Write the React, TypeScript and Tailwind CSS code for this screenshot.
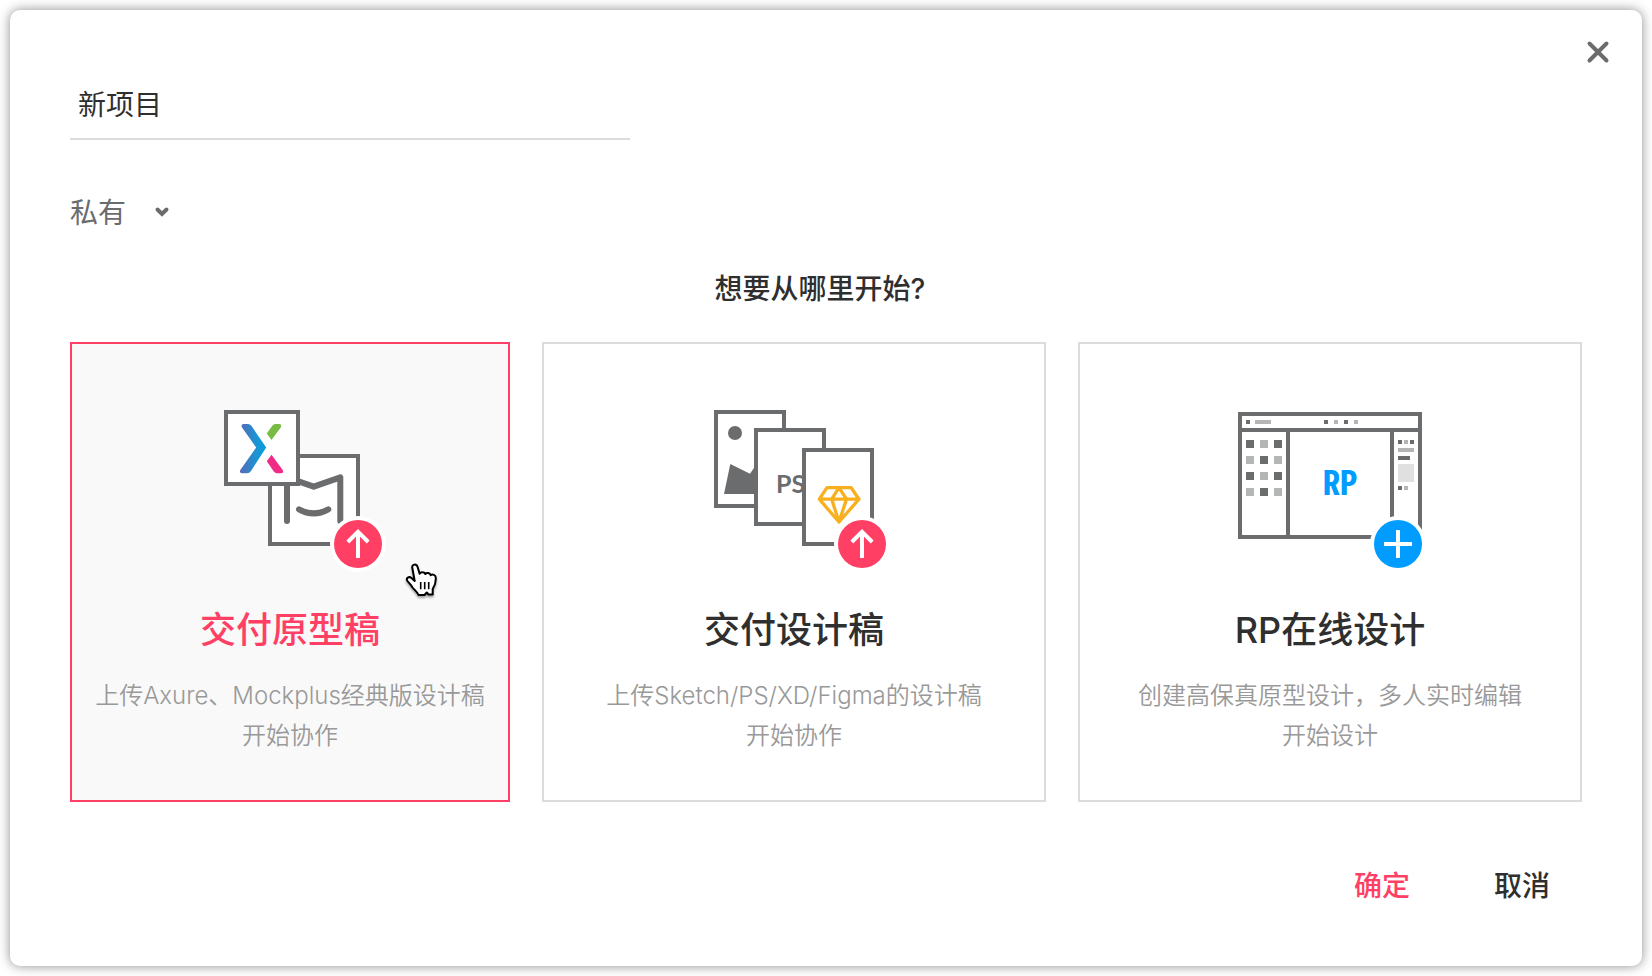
import { useState } from 'react';
import type { ReactNode } from 'react';
import clsx from 'clsx';

function UploadBadge() {
  return (
    <g>
      <circle cx="168" cy="144" r="28" fill="#fff" />
      <circle cx="168" cy="144" r="24" fill="#ff4064" />
      <path d="M168 158V132M157.8 142L168 131.8L178.2 142" fill="none" stroke="#fff" strokeWidth="4" />
    </g>
  );
}

function PrototypeIcon() {
  return (
    <svg width="200" height="180" viewBox="0 0 200 180" aria-hidden="true">
      <defs>
        <linearGradient id="axure-blue" x1="0" x2="1" y1="0" y2="0">
          <stop offset="0" stopColor="#5a6ab4" />
          <stop offset="0.6" stopColor="#1c93d3" />
          <stop offset="1" stopColor="#069fdc" />
        </linearGradient>
      </defs>
      <rect x="80" y="56" width="88" height="88" fill="#fff" stroke="#6b6c6e" strokeWidth="4" />
      <path
        d="M97 121V77.3L123.7 86.7L150.3 77.3V121M109 109.3Q123.7 117.5 138.3 109.3"
        fill="none"
        stroke="#6b6c6e"
        strokeWidth="6"
        strokeLinecap="round"
        strokeLinejoin="round"
      />
      <rect x="36" y="12" width="72" height="72" fill="#fff" stroke="#6b6c6e" strokeWidth="4" />
      <path
        d="M53.5 24H58q2 0 3.2 1.6L76.2 47.5L61 71q-1.5 2.3-4 2.3H52c-2 0-2.6-2-1.5-3.6L66.2 47.5L52 27.5c-1-1.7-.3-3.5 1.5-3.5z"
        fill="url(#axure-blue)"
      />
      <path d="M89 24c2 0 2.7 1.7 1.7 3.4L81.5 40L76.8 33.5L82.3 25.7q1.2-1.7 3-1.7z" fill="#78bc43" />
      <path d="M81.5 54.8L92.5 69.7c1.2 1.7.5 3.6-1.5 3.6h-4q-2 0-3.2-1.7L76.8 61.3z" fill="#ef2b87" />
      <UploadBadge />
    </svg>
  );
}

function DesignIcon() {
  return (
    <svg width="200" height="180" viewBox="0 0 200 180" aria-hidden="true">
      <rect x="22" y="12" width="68" height="94" fill="#fff" stroke="#6b6c6e" strokeWidth="4" />
      <circle cx="41" cy="33" r="7" fill="#6b6c6e" />
      <path d="M36.3 64L56 73.7L62 65V94H30z" fill="#6b6c6e" />
      <rect x="62" y="30" width="68" height="94" fill="#fff" stroke="#6b6c6e" strokeWidth="4" />
      <text x="82" y="93" fill="#6b6c6e" className="font-['Lato',sans-serif] text-[25px] font-bold">
        PS
      </text>
      <rect x="110" y="50" width="68" height="94" fill="#fff" stroke="#6b6c6e" strokeWidth="4" />
      <path
        d="M133 87.7H157.2L165 99.2L145 122L125.3 99.2zM125.3 99.2H165M137.7 99.2L145 87.7L152.5 99.2L145 122z"
        fill="none"
        stroke="#f9b01e"
        strokeWidth="3.3"
        strokeLinejoin="round"
      />
      <UploadBadge />
    </svg>
  );
}

function OnlineIcon() {
  const tools = [40, 56, 72, 88].flatMap((y, row) =>
    [16, 30, 44].map((x, col) => ({ x, y, dark: (row + col) % 2 === 0 }))
  );

  return (
    <svg width="200" height="180" viewBox="0 0 200 180" aria-hidden="true">
      <rect x="10" y="14" width="180" height="123" fill="#fff" stroke="#6b6c6e" strokeWidth="4" />
      <path d="M8 30H192M58 30V137M162 30V137" stroke="#6b6c6e" strokeWidth="4" />
      <path d="M16 22h4M94 22h4M114 22h4M168 42h4M180 42h4M168 58h12M168 88h4" stroke="#6b6c6e" strokeWidth="4" />
      <path d="M25 22h16M104 22h4M124 22h4M174 42h4M168 50h16M174 88h4" stroke="#b4b5b5" strokeWidth="4" />
      {tools.map((tool) => (
        <rect
          key={`${tool.x}-${tool.y}`}
          x={tool.x}
          y={tool.y}
          width="8"
          height="8"
          fill={tool.dark ? '#6b6c6e' : '#b4b5b5'}
        />
      ))}
      <rect x="168" y="64" width="16" height="18" fill="#e0e0e0" />
      <text
        x="110"
        y="95"
        textAnchor="middle"
        fill="#009cff"
        className="font-['Noto_Sans_Mono_CJK_SC','Roboto',sans-serif] text-[34px] font-bold"
      >
        RP
      </text>
      <circle cx="168" cy="144" r="28" fill="#fff" />
      <circle cx="168" cy="144" r="24" fill="#009cff" />
      <path d="M154 144H182M168 130V158" stroke="#fff" strokeWidth="4" />
    </svg>
  );
}

function HandPointer() {
  return (
    <svg
      width="36"
      height="38"
      viewBox="0 0 36 38"
      aria-hidden="true"
      className="pointer-events-none absolute top-[219px] left-[333px] drop-shadow-[0_2px_1px_rgba(0,0,0,0.35)]"
    >
      <path
        d="M7.3 4.8C6.6 .8 11.5 .6 12.6 4L14.6 10.8C15.5 8.8 19.2 8.800 20.3 11C21.8 9.2 25 9.6 25.7 12.2C27.5 10.8 30.7 11.8 30.8 14.8C31 19.5 30 22.5 27.7 26V31.5H23.5L21.8 29.5L19.5 32H13.5C12.5 29 9.5 27 7.5 24.5C6 21.5 4.500 20.5 2.5 18C.5 15 4 13 6.5 15L9.7 18z"
        fill="#fff"
        stroke="#000"
        strokeWidth="2"
        strokeLinejoin="round"
      />
      <path d="M15.7 19V26.3M19.7 19V26.3M23.7 19V26.3" stroke="#000" strokeWidth="1.6" />
    </svg>
  );
}

type Option = {
  id: string;
  title: string;
  description: string;
  icon: ReactNode;
};

const options: Option[] = [
  {
    id: 'prototype',
    title: '交付原型稿',
    description: '上传Axure、Mockplus经典版设计稿\n开始协作',
    icon: <PrototypeIcon />,
  },
  {
    id: 'design',
    title: '交付设计稿',
    description: '上传Sketch/PS/XD/Figma的设计稿\n开始协作',
    icon: <DesignIcon />,
  },
  {
    id: 'online',
    title: 'RP在线设计',
    description: '创建高保真原型设计，多人实时编辑\n开始设计',
    icon: <OnlineIcon />,
  },
];

export default function App() {
  const [name, setName] = useState('新项目');
  const [selected, setSelected] = useState('prototype');

  return (
    <div className="min-h-screen bg-white p-2.5 font-['Inter','Noto_Sans_CJK_SC',sans-serif] text-[28px] leading-10 text-[#2f2f2f]">
      <div
        role="dialog"
        aria-labelledby="start-heading"
        className="relative rounded-[10px] bg-white p-15 shadow-[0_0_12px_rgba(0,0,0,0.45)]"
      >
        <button type="button" aria-label="关闭" className="absolute top-[22px] right-6 p-1">
          <svg width="32" height="32" viewBox="0 0 32 32" aria-hidden="true">
            <path d="M7.5 7.5L24.5 24.5M24.5 7.5L7.5 24.5" stroke="#6b6c6e" strokeWidth="4" strokeLinecap="round" />
          </svg>
        </button>

        <input
          type="text"
          aria-label="项目名称"
          value={name}
          onChange={(e) => setName(e.target.value)}
          className="block h-[70px] w-full max-w-[560px] border-b-2 border-[#dcdcdc] px-2 pb-0.5 outline-none"
        />

        <div className="relative mt-[53px] w-fit text-[#6b6c6e]">
          <select aria-label="项目权限" className="block h-10 appearance-none bg-transparent pr-12 outline-none">
            <option>私有</option>
            <option>公开</option>
          </select>
          <svg
            width="16"
            height="12"
            viewBox="0 0 16 12"
            aria-hidden="true"
            className="pointer-events-none absolute top-[13px] right-[5px]"
          >
            <path
              d="M3.5 3.5L8 8L12.5 3.5"
              fill="none"
              stroke="#6b6c6e"
              strokeWidth="4"
              strokeLinecap="round"
            />
          </svg>
        </div>

        <h1 id="start-heading" className="mt-9 pr-3 text-center font-medium">
          想要从哪里开始?
        </h1>

        <div className="mt-[33px] grid grid-cols-[440fr_504fr_504fr] gap-8">
          {options.map((option) => {
            const active = option.id === selected;
            return (
              <button
                key={option.id}
                type="button"
                aria-pressed={active}
                onClick={() => setSelected(option.id)}
                className={clsx(
                  'relative flex flex-col items-center border-2 pt-14 pb-11',
                  active ? 'border-[#ff4064] bg-[#f9f9f9]' : 'border-[#dcdcdc] bg-white'
                )}
              >
                {option.icon}
                <span className={clsx('mt-[29px] text-4xl leading-[42px] font-medium', active && 'text-[#ff4064]')}>
                  {option.title}
                </span>
                <span className="mt-[25px] text-2xl leading-10 font-[350] whitespace-pre-line text-[#999]">
                  {option.description}
                </span>
                {active && <HandPointer />}
              </button>
            );
          })}
        </div>

        <div className="mt-16 flex justify-end gap-21 pr-8 font-medium">
          <button type="button" className="text-[#ff4064]">
            确定
          </button>
          <button type="button">取消</button>
        </div>
      </div>
    </div>
  );
}
